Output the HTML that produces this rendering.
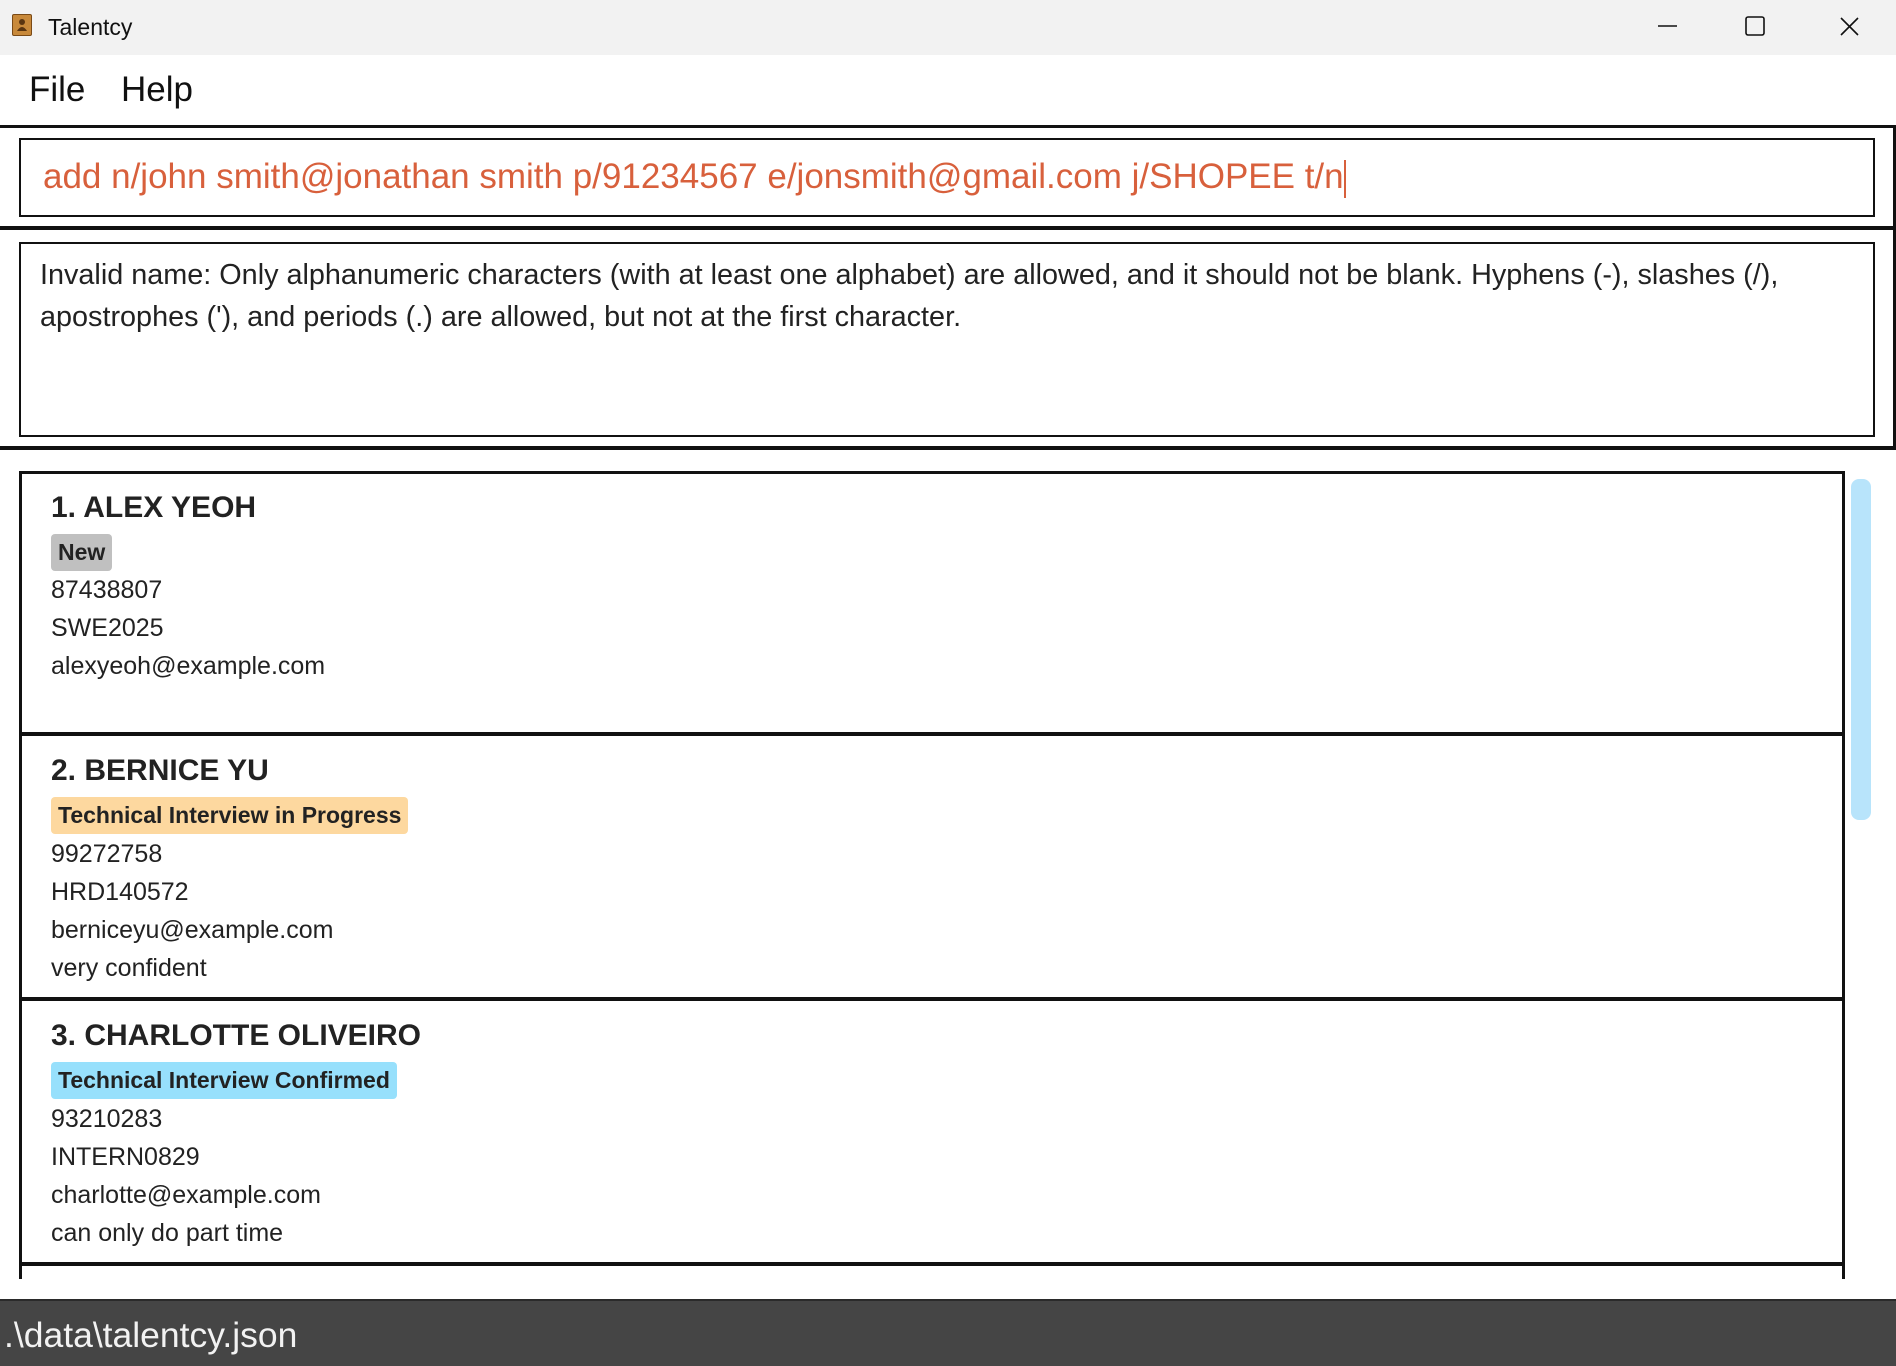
<!DOCTYPE html>
<html><head><meta charset="utf-8"><style>
*{margin:0;padding:0;box-sizing:border-box}
body{width:1896px;height:1366px;position:relative;background:#fff;font-family:"Liberation Sans",sans-serif;color:#222;overflow:hidden}
.a{position:absolute;white-space:nowrap}
.nm{font-weight:bold;font-size:30px;line-height:36px}
.tg{font-weight:bold;font-size:23px;line-height:37px;padding:0 7px;border-radius:4px;height:37px}
.ln{font-size:25px;line-height:30px}
</style></head><body>
<div class="a" style="left:0;top:0;width:1896px;height:55px;background:#f2f2f2"></div>
<div class="a" style="left:12px;top:14px;width:20px;height:22px;background:#c8893a;border:1px solid #7a4a16;border-radius:2px"></div>
<div class="a" style="left:17px;top:18px;width:10px;height:14px;"><svg width="10" height="14"><circle cx="5" cy="4" r="3" fill="#5a3510"/><path d="M0 13 Q5 5 10 13Z" fill="#5a3510"/></svg></div>
<div class="a" style="left:48px;top:14px;font-size:23px;line-height:26px;color:#111">Talentcy</div>
<svg class="a" style="left:1650px;top:10px" width="240" height="36"><path d="M8 16H27" stroke="#111" stroke-width="1.6"/><rect x="96" y="7" width="18" height="18" rx="2" fill="none" stroke="#111" stroke-width="1.6"/><path d="M191 8L208 25M208 8L191 25" stroke="#111" stroke-width="1.6"/></svg>
<div class="a" style="left:29px;top:70px;font-size:35px;line-height:40px;color:#111">File</div>
<div class="a" style="left:121px;top:70px;font-size:35px;line-height:40px;color:#111">Help</div>
<div class="a" style="left:0;top:125px;width:1896px;height:3px;background:#111"></div>
<div class="a" style="left:1893px;top:125px;width:3px;height:325px;background:#111"></div>
<div class="a" style="left:19px;top:138px;width:1856px;height:79px;border:2.5px solid #111"></div>
<div class="a" style="left:43px;top:157px;font-size:35px;line-height:40px;color:#d8603c">add n/john smith@jonathan smith p/91234567 e/jonsmith@gmail.com j/SHOPEE t/n<span style="display:inline-block;width:2px;height:38px;background:#d8603c;vertical-align:middle"></span></div>
<div class="a" style="left:0;top:226px;width:1896px;height:4px;background:#111"></div>
<div class="a" style="left:19px;top:242px;width:1856px;height:195px;border:2.5px solid #111"></div>
<div class="a" style="left:40px;top:254px;font-size:28.8px;line-height:42px;color:#222">Invalid name: Only alphanumeric characters (with at least one alphabet) are allowed, and it should not be blank. Hyphens (-), slashes (/),<br>apostrophes ('), and periods (.) are allowed, but not at the first character.</div>
<div class="a" style="left:0;top:446px;width:1896px;height:4px;background:#111"></div>
<div class="a" style="left:19px;top:471px;width:3px;height:808px;background:#111"></div>
<div class="a" style="left:1842px;top:471px;width:3px;height:808px;background:#111"></div>
<div class="a" style="left:19px;top:471px;width:1826px;height:3px;background:#111"></div>
<div class="a" style="left:19px;top:732px;width:1826px;height:4px;background:#111"></div>
<div class="a" style="left:19px;top:997px;width:1826px;height:4px;background:#111"></div>
<div class="a" style="left:19px;top:1262px;width:1826px;height:4px;background:#111"></div>
<div class="a" style="left:1851px;top:479px;width:20px;height:341px;background:#b8e4fb;border-radius:8px"></div>

<div class="a nm" style="left:51px;top:490px">1. ALEX YEOH</div>
<div class="a tg" style="left:51px;top:534px;background:#c0c0c0">New</div>
<div class="a ln" style="left:51px;top:575px">87438807</div>
<div class="a ln" style="left:51px;top:613px">SWE2025</div>
<div class="a ln" style="left:51px;top:651px">alexyeoh@example.com</div>

<div class="a nm" style="left:51px;top:753px">2. BERNICE YU</div>
<div class="a tg" style="left:51px;top:797px;background:#fdd89f">Technical Interview in Progress</div>
<div class="a ln" style="left:51px;top:839px">99272758</div>
<div class="a ln" style="left:51px;top:877px">HRD140572</div>
<div class="a ln" style="left:51px;top:915px">berniceyu@example.com</div>
<div class="a ln" style="left:51px;top:953px">very confident</div>

<div class="a nm" style="left:51px;top:1018px">3. CHARLOTTE OLIVEIRO</div>
<div class="a tg" style="left:51px;top:1062px;background:#97e0fc">Technical Interview Confirmed</div>
<div class="a ln" style="left:51px;top:1104px">93210283</div>
<div class="a ln" style="left:51px;top:1142px">INTERN0829</div>
<div class="a ln" style="left:51px;top:1180px">charlotte@example.com</div>
<div class="a ln" style="left:51px;top:1218px">can only do part time</div>

<div class="a" style="left:0;top:1299px;width:1896px;height:67px;background:#454545;border-top:2px solid #2a2a2a"></div>
<div class="a" style="left:4px;top:1315px;font-size:35.5px;line-height:40px;color:#f2f2f2">.\data\talentcy.json</div>
</body></html>
